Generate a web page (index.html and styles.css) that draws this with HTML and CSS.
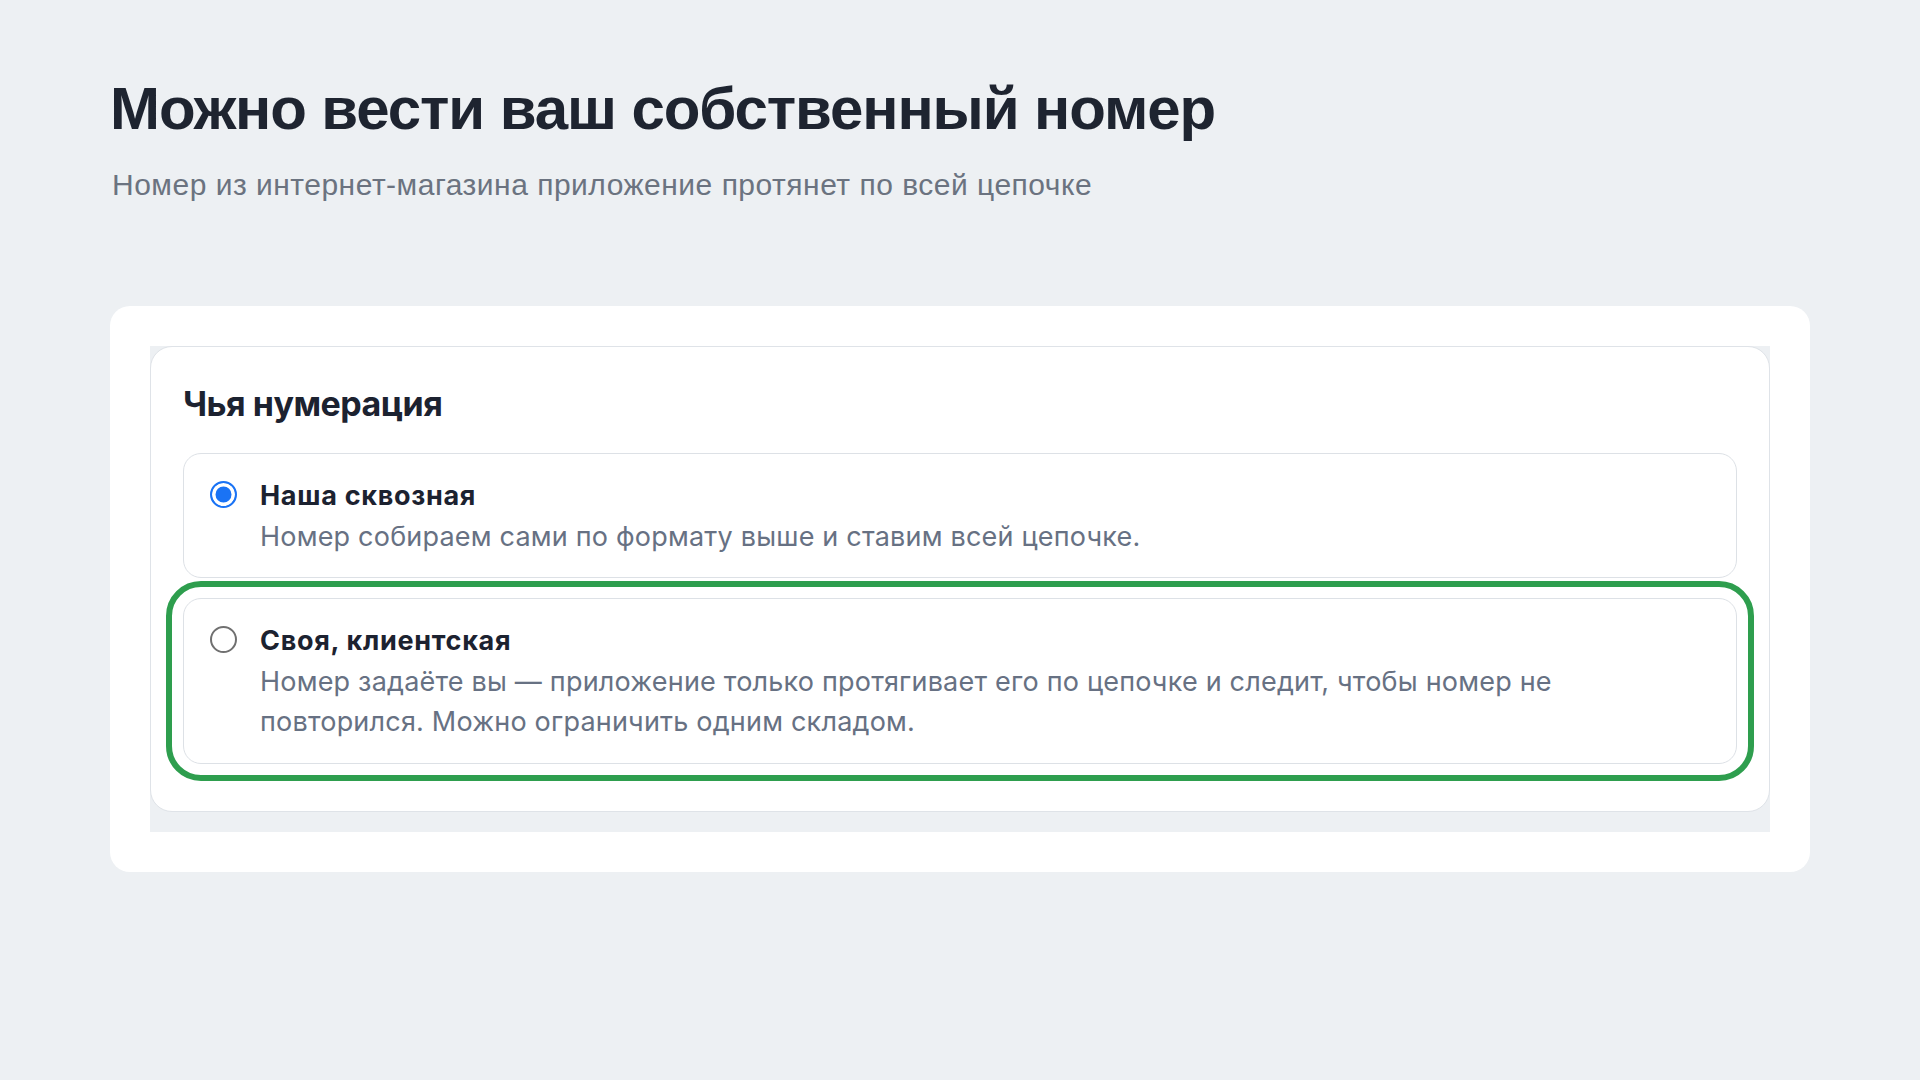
FILE: index.html
```html
<!DOCTYPE html>
<html lang="ru">
<head>
    <meta charset="UTF-8">
    <meta name="viewport" content="width=device-width, initial-scale=1.0">
    <title>Нумерация заказов</title>
    <link rel="stylesheet" href="styles.css">
</head>
<body>
    <main class="page">
        <h1 class="page-title">Можно вести ваш собственный номер</h1>
        <p class="page-lead">Номер из интернет-магазина приложение протянет по всей цепочке</p>

        <section class="sheet">
            <div class="sheet-frame">
                <div class="panel">
                    <h2 class="panel-title">Чья нумерация</h2>
                    <div class="choices">
                        <label class="choice">
                            <input class="choice-radio" type="radio" name="numbering" value="ours" checked>
                            <span class="choice-text">
                                <span class="choice-name">Наша сквозная</span>
                                <span class="choice-desc">Номер собираем сами по формату выше и ставим всей цепочке.</span>
                            </span>
                        </label>
                        <!-- клиентский вариант подсвечен рамкой -->
                        <label class="choice choice-marked">
                            <input class="choice-radio" type="radio" name="numbering" value="client">
                            <span class="choice-text">
                                <span class="choice-name">Своя, клиентская</span>
                                <span class="choice-desc">Номер задаёте вы — приложение только протягивает его по цепочке и следит, чтобы номер не повторился. Можно ограничить одним складом.</span>
                            </span>
                        </label>
                    </div>
                </div>
            </div>
        </section>
    </main>
</body>
</html>
```

FILE: styles.css
```css
body {
    margin: 0;
    background: #edf0f3;
    color: #1e2430;
    font-family: "Liberation Sans", Arial, sans-serif;
}

.page {
    padding: 73px 110px 0;
}

.page-title {
    margin: 0;
    font-size: 60px;
    line-height: 72px;
    font-weight: 700;
    letter-spacing: -1.1px;
    color: #1e2430;
}

.page-lead {
    margin: 19px 0 0 2px;
    font-size: 30px;
    line-height: 42px;
    letter-spacing: 0.5px;
    color: #6b7380;
}

.sheet {
    margin-top: 100px;
    background: #fff;
    border-radius: 20px;
    padding: 40px;
}

.sheet-frame {
    background: #edf0f3;
    padding-bottom: 20px;
}

.panel {
    background: #fff;
    border: 1px solid #dfe3e8;
    border-radius: 22px;
    padding: 34px 32px 47px;
    font-family: Inter, "Noto Sans", sans-serif;
}

.panel-title {
    margin: 0;
    font-size: 34px;
    line-height: 45px;
    font-weight: 700;
    letter-spacing: -0.5px;
    color: #1c2230;
}

.choices {
    display: flex;
    flex-direction: column;
    gap: 20px;
    margin-top: 27px;
}

.choice {
    display: flex;
    align-items: flex-start;
    gap: 23px;
    border: 1px solid #dde1e6;
    border-radius: 18px;
    padding: 22px 48px 20px 26px;
    cursor: pointer;
}

.choice-marked {
    outline: 6px solid #2e9e4e;
    outline-offset: 11px;
}

.choice-radio {
    appearance: none;
    -webkit-appearance: none;
    flex: none;
    width: 27px;
    height: 27px;
    margin: 5px 0 0;
    border: 2px solid #707070;
    border-radius: 50%;
    background: #fff;
}

.choice-radio:checked {
    border-color: #1a73f5;
    background: #1a73f5;
    box-shadow: inset 0 0 0 3.5px #fff;
}

.choice-text {
    display: flex;
    flex-direction: column;
    font-size: 27px;
    line-height: 40.5px;
}

.choice-name {
    font-weight: 700;
    letter-spacing: 0.7px;
    color: #1c2230;
}

.choice-desc {
    letter-spacing: 0.2px;
    color: #677183;
}
```
